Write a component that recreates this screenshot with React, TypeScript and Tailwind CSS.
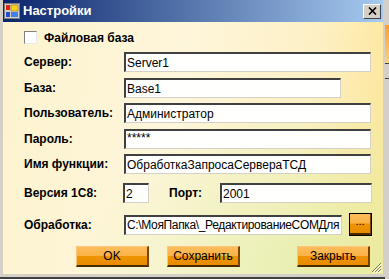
import React from "react";

const label = "font-['Liberation_Sans',Arial,sans-serif] text-[12px] font-bold text-black leading-none";
const field =
  "h-[20px] bg-[#fffffe] border-t-2 border-l-2 border-t-[#404040] border-l-[#404040] border-b border-r border-b-[#d4d0c8] border-r-[#d4d0c8] flex items-center pl-[1px] font-['Liberation_Sans',Arial,sans-serif] text-[12px] text-black leading-none overflow-hidden whitespace-nowrap";
const btn =
  "h-[21px] w-[73px] flex items-center justify-center font-['Liberation_Sans',Arial,sans-serif] text-[12px] text-black bg-[linear-gradient(#fdbd5c_0%,#fbb247_48%,#ef9400_52%,#e98c00_100%)] border-t border-l border-t-[#fcc77a] border-l-[#fcc77a] border-b-2 border-r-2 border-b-[#4a2a00] border-r-[#7a4400]";

const TitleIcon = () => (
  <svg width="16" height="16" viewBox="0 0 16 16">
    <rect x="0.5" y="0.5" width="15" height="15" fill="#d4d0c8" stroke="#808080" />
    <rect x="2" y="2" width="4" height="5" fill="#e02010" />
    <rect x="7" y="2" width="7" height="6" fill="#f8d020" stroke="#a07000" strokeWidth="0.6" />
    <rect x="2" y="9" width="4" height="5" fill="#2050d0" />
    <rect x="7" y="9" width="7" height="5" fill="#4080f0" />
  </svg>
);

const Row = ({ name, value, w = "w-[247px]", mt }: { name: string; value: string; w?: string; mt: string }) => (
  <div className={`flex items-center ${mt}`}>
    <div className={`w-[100px] ${label}`}>{name}</div>
    <div className={`${field} ${w}`}>{value}</div>
  </div>
);

export default function App() {
  return (
    <div className="w-[389px] h-[279px] flex bg-[#404040] overflow-hidden">
      <div className="w-[385px] h-[277px] flex flex-col bg-[#d4d0c8] border-l-[3px] border-r-[2px] border-b-[3px] border-[#d4d0c8] shrink-0">
        <div className="h-[22px] flex items-center bg-[linear-gradient(to_right,#0a246a,#a6caf0)] pl-[1px] pr-[2px]">
          <TitleIcon />
          <span className="ml-[3px] font-['Liberation_Sans',Arial,sans-serif] text-[13px] font-bold text-white">Настройки</span>
          <div className="ml-auto w-[18px] h-[15px] bg-[#d4d0c8] border-t border-l border-white border-b border-r border-b-[#404040] border-r-[#404040] flex items-center justify-center">
            <svg width="9" height="8" viewBox="0 0 9 8">
              <path d="M1 0.5 L8 7.5 M8 0.5 L1 7.5" stroke="black" strokeWidth="1.6" />
            </svg>
          </div>
        </div>
        <div className="relative flex-1 flex flex-col pl-[21px] bg-[linear-gradient(100deg,#fdf3cf_0%,#fef6db_45%,#fdf0c4_75%,#fde490_100%)]">
          <div className="absolute inset-0 bg-[radial-gradient(ellipse_at_85%_100%,rgba(220,240,170,0.7),transparent_55%)]" />
          <div className="relative flex flex-col">
            <div className="flex items-center mt-[9px]">
              <div className="w-[13px] h-[13px] bg-white border-t border-l border-[#808080] border-b border-r border-b-[#e8e8e8] border-r-[#e8e8e8]" />
              <span className={`ml-[7px] ${label}`}>Файловая база</span>
            </div>
            <Row name="Сервер:" value="Server1" mt="mt-[8px]" />
            <Row name="База:" value="Base1" w="w-[217px]" mt="mt-[6px]" />
            <Row name="Пользователь:" value="Администратор" mt="mt-[5px]" />
            <div className="flex items-center mt-[6px]">
              <div className={`w-[100px] ${label}`}>Пароль:</div>
              <div className={`${field} w-[247px] !items-start pt-[1px] text-[8px]`}>*****</div>
            </div>
            <Row name="Имя функции:" value="ОбработкаЗапросаСервераТСД" mt="mt-[5px]" />
            <div className="flex items-center mt-[9px]">
              <div className={`w-[99px] ${label}`}>Версия 1С8:</div>
              <div className={`${field} w-[26px]`}>2</div>
              <div className={`ml-[20px] w-[51px] ${label}`}>Порт:</div>
              <div className={`${field} w-[152px]`}>2001</div>
            </div>
            <div className="flex items-center mt-[10px]">
              <div className={`w-[100px] ${label}`}>Обработка:</div>
              <div className={`${field} w-[218px] tracking-[-0.35px]`}>C:\МояПапка\_РедактированиеCOMДля</div>
              <div className="ml-[7px] w-[23px] h-[23px] border border-black">
                <div className="w-full h-full flex items-center justify-center pb-[4px] font-['Liberation_Sans',Arial,sans-serif] text-[11px] text-black bg-[linear-gradient(#fdbd5c_0%,#fbb247_45%,#ef9400_55%,#e98c00_100%)] border-b-2 border-r border-b-[#4a2a00] border-r-[#7a4400]">...</div>
              </div>
            </div>
            <div className="flex mt-[10px]">
              <div className={`ml-[52px] ${btn}`}>OK</div>
              <div className={`ml-[18px] ${btn}`}>Сохранить</div>
              <div className={`ml-[57px] ${btn}`}>Закрыть</div>
            </div>
          </div>
          <svg className="absolute right-[1px] bottom-[1px]" width="12" height="12" viewBox="0 0 12 12">
            <path d="M11 2 L2 11 M11 5 L5 11 M11 8 L8 11" stroke="#8a7a50" strokeWidth="1" />
            <path d="M12 3 L3 12 M12 6 L6 12 M12 9 L9 12" stroke="#ffffff" strokeWidth="1" />
          </svg>
        </div>
      </div>
      <div className="flex-1 flex flex-col bg-[#d4d0c8]">
        <div className="h-[25px]" />
        <div className="h-[38px] bg-[linear-gradient(#f6a030,#fbd08a)]" />
        <div className="h-[1px] bg-[#404040]" />
        <div className="h-[14px]" />
        <div className="h-[1px] bg-[#404040]" />
      </div>
    </div>
  );
}
